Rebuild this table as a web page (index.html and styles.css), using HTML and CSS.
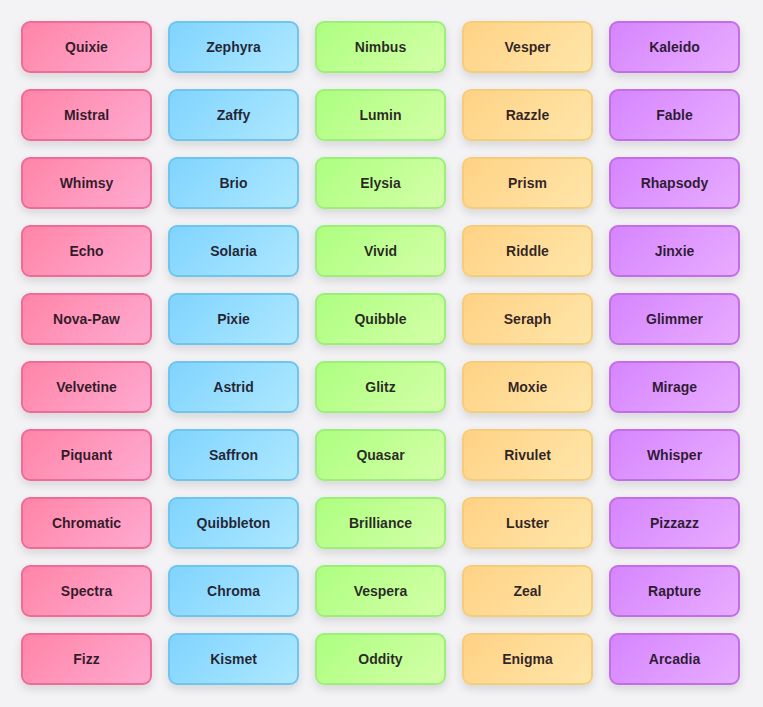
FILE: index.html
```html
<!DOCTYPE html>
<html>
<head>
<meta charset="utf-8">
<link rel="stylesheet" href="styles.css">
</head>
<body>
<div class="grid">
<div class="btn c1">Quixie</div><div class="btn c2">Zephyra</div><div class="btn c3">Nimbus</div><div class="btn c4">Vesper</div><div class="btn c5">Kaleido</div>
<div class="btn c1">Mistral</div><div class="btn c2">Zaffy</div><div class="btn c3">Lumin</div><div class="btn c4">Razzle</div><div class="btn c5">Fable</div>
<div class="btn c1">Whimsy</div><div class="btn c2">Brio</div><div class="btn c3">Elysia</div><div class="btn c4">Prism</div><div class="btn c5">Rhapsody</div>
<div class="btn c1">Echo</div><div class="btn c2">Solaria</div><div class="btn c3">Vivid</div><div class="btn c4">Riddle</div><div class="btn c5">Jinxie</div>
<div class="btn c1">Nova-Paw</div><div class="btn c2">Pixie</div><div class="btn c3">Quibble</div><div class="btn c4">Seraph</div><div class="btn c5">Glimmer</div>
<div class="btn c1">Velvetine</div><div class="btn c2">Astrid</div><div class="btn c3">Glitz</div><div class="btn c4">Moxie</div><div class="btn c5">Mirage</div>
<div class="btn c1">Piquant</div><div class="btn c2">Saffron</div><div class="btn c3">Quasar</div><div class="btn c4">Rivulet</div><div class="btn c5">Whisper</div>
<div class="btn c1">Chromatic</div><div class="btn c2">Quibbleton</div><div class="btn c3">Brilliance</div><div class="btn c4">Luster</div><div class="btn c5">Pizzazz</div>
<div class="btn c1">Spectra</div><div class="btn c2">Chroma</div><div class="btn c3">Vespera</div><div class="btn c4">Zeal</div><div class="btn c5">Rapture</div>
<div class="btn c1">Fizz</div><div class="btn c2">Kismet</div><div class="btn c3">Oddity</div><div class="btn c4">Enigma</div><div class="btn c5">Arcadia</div>
</div>
</body>
</html>
```
FILE: styles.css
```css
html, body {
  margin: 0;
  padding: 0;
  background: #f3f3f5;
  font-family: "Liberation Sans", Arial, sans-serif;
}
.grid {
  display: grid;
  grid-template-columns: repeat(5, 1fr);
  gap: 16px;
  padding: 21px 23px 21px 21px;
}
.btn {
  box-sizing: border-box;
  height: 52px;
  border: 2px solid;
  border-radius: 9px;
  display: flex;
  align-items: center;
  justify-content: center;
  font-weight: bold;
  font-size: 14px;
  color: rgba(20, 10, 20, 0.88);
  box-shadow: 0 4px 10px rgba(0, 0, 0, 0.12);
}
.c1 { background: linear-gradient(135deg, #ff85a8, #ffaad0); border-color: #f06b96; }
.c2 { background: linear-gradient(135deg, #80d4ff, #aee8ff); border-color: #6fc5ee; }
.c3 { background: linear-gradient(135deg, #adff80, #d4ffa8); border-color: #9cf07a; }
.c4 { background: linear-gradient(135deg, #ffd285, #ffe6aa); border-color: #f5cd7a; }
.c5 { background: linear-gradient(135deg, #d685ff, #e8acff); border-color: #c46de8; }
```
